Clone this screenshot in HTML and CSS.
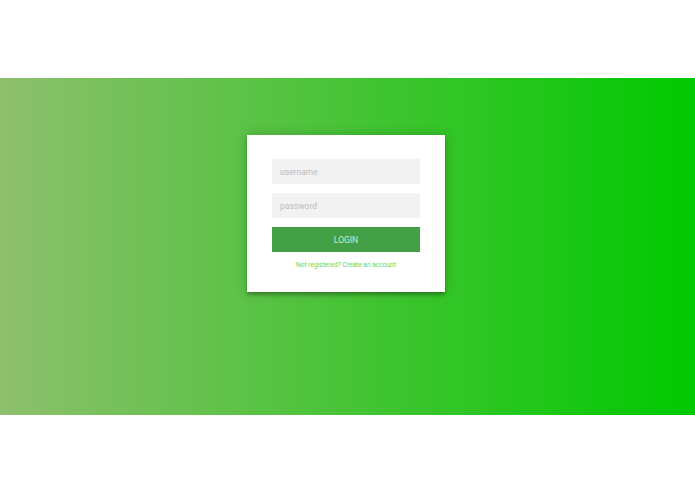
FILE: index.html
```html
<!DOCTYPE html>
<html>
<head>
<meta charset="utf-8">
<link rel="stylesheet" href="styles.css">
</head>
<body>
<div class="top"></div>
<div class="band">
  <div class="form">
    <form class="login">
      <input type="text" placeholder="username">
      <input type="password" placeholder="password">
      <button type="button">login</button>
      <p class="message">Not registered? <a href="#">Create an account</a></p>
    </form>
  </div>
</div>
</body>
</html>
```
FILE: styles.css
```css
html, body { margin: 0; padding: 0; background: #fff; }
body { font-family: Roboto, "Liberation Sans", sans-serif; }
.top { height: 78px; }
.band {
  height: 337px;
  box-sizing: border-box;
  padding: 57px 3px 0 0;
  background: linear-gradient(to right, #8ebf6d, #00c900);
}
.form {
  width: 198px;
  margin: 0 auto;
  background: #fff;
  box-sizing: border-box;
  padding: 24px 25px 23px;
  box-shadow: 0 0 11px 0 rgba(0,0,0,0.2), 0 3px 3px 0 rgba(0,0,0,0.24);
}
.login { display: flex; flex-direction: column; margin: 0; }
.login input {
  font-family: Roboto, "Liberation Sans", sans-serif;
  font-weight: 400;
  outline: 0;
  background: #f2f2f2;
  border: 0;
  margin: 0 0 9px;
  height: 25px;
  padding: 0 8px;
  box-sizing: border-box;
  width: 100%;
  font-size: 8.5px;
  color: #333;
}
.login input::placeholder { color: #bcbcbc; }
.login button {
  font-family: Roboto, "Liberation Sans", sans-serif;
  font-weight: 400;
  text-transform: uppercase;
  outline: 0;
  background: #43a047;
  border: 0;
  height: 25px;
  width: 100%;
  color: #cfe8cf;
  font-size: 8.5px;
  padding: 0;
  cursor: pointer;
}
.message {
  margin: 9px 0 0;
  color: #5ad95a;
  font-size: 6.6px;
  text-align: center;
}
.message a { color: #5ad95a; text-decoration: none; }
```
